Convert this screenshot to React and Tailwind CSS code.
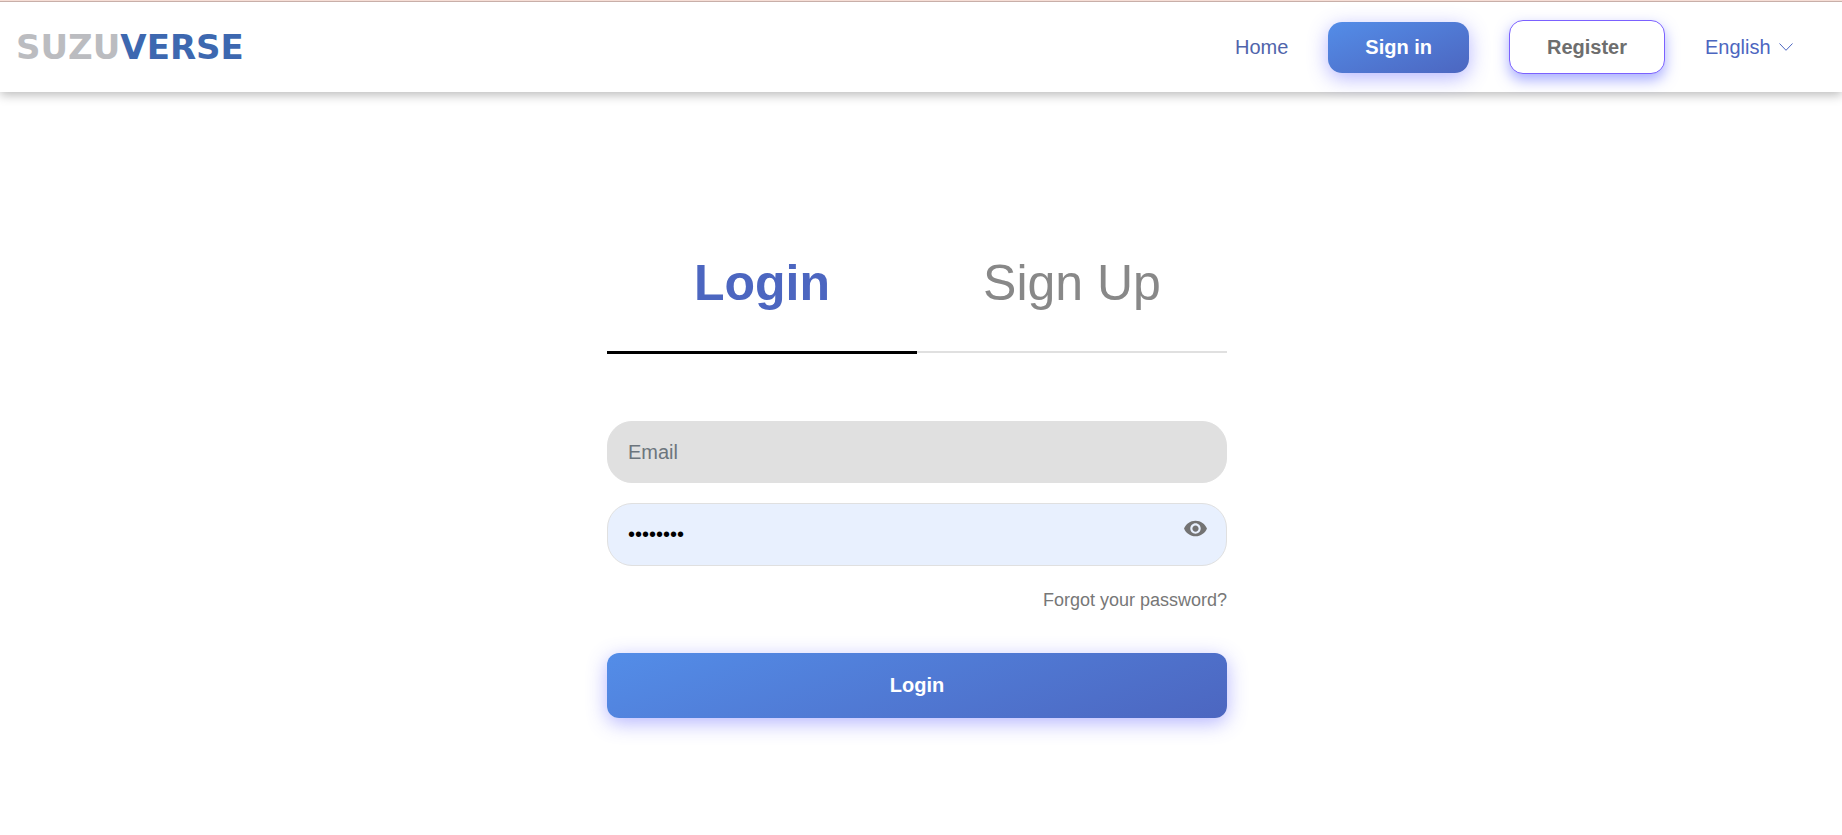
import { useState } from "react";
import { MdVisibility } from "react-icons/md";

function Navbar() {
  return (
    <header className="border-t border-[#f6ded6] bg-white shadow-[0_3px_10px_rgba(0,0,0,0.27)]">
      <div className="flex items-center justify-between h-[91px] pl-4 pr-[49px] border-t border-[#c8afa9]">
        <a
          href="#"
          className="font-['DejaVu_Sans',sans-serif] font-bold text-[34px] leading-10 text-[#bbbcc0]"
        >
          SUZU<span className="text-[#3d68b0]">VERSE</span>
        </a>
        <nav className="flex items-center gap-10 text-xl">
          <a href="#" className="text-[#5064ab]">
            Home
          </a>
          <button className="h-[51px] px-[37px] rounded-[14px] bg-linear-160 from-[#538de8] to-[#4c66c0] font-bold text-white shadow-[0_5px_20px_rgba(90,90,255,0.45)]">
            Sign in
          </button>
          <button className="h-[54px] px-[37px] rounded-[14px] border border-[#7b61ff] bg-white font-bold text-[#6e6e6e] shadow-[0_6px_14px_rgba(80,90,255,0.5)]">
            Register
          </button>
          <label className="flex items-center gap-2 text-[#4c66c0]">
            <select
              aria-label="Language"
              className="appearance-none bg-transparent"
            >
              <option>English</option>
            </select>
            <svg
              className="w-[14px] h-2"
              viewBox="0 0 14 8"
              fill="none"
              stroke="currentColor"
            >
              <path d="M.5.5 7 7.3 13.5.5" />
            </svg>
          </label>
        </nav>
      </div>
    </header>
  );
}

function Tabs() {
  return (
    <div className="flex items-start text-[50px] leading-[60px]">
      <button className="flex-1 pb-[38px] border-b-3 border-black font-bold text-[#4c66c0]">
        Login
      </button>
      <button className="flex-1 pb-[38px] border-b-2 border-[#e0e0e0] text-[#888888]">
        Sign Up
      </button>
    </div>
  );
}

export default function App() {
  const [email, setEmail] = useState("");
  const [password, setPassword] = useState("password");
  const [visible, setVisible] = useState(false);

  return (
    <div className="min-h-screen bg-white font-['Liberation_Sans',Arial,sans-serif]">
      <Navbar />
      <main className="pt-[161px] pr-2">
        <div className="w-full max-w-[620px] mx-auto">
          <Tabs />
          <form className="mt-[67px]" onSubmit={(e) => e.preventDefault()}>
            <input
              type="email"
              aria-label="Email"
              placeholder="Email"
              value={email}
              onChange={(e) => setEmail(e.target.value)}
              className="block w-full h-[62px] px-5 rounded-[25px] border border-[#e0e0e0] bg-[#e0e0e0] text-xl placeholder:text-[#6c757d]"
            />
            <div className="relative mt-5">
              <input
                type={visible ? "text" : "password"}
                aria-label="Password"
                value={password}
                onChange={(e) => setPassword(e.target.value)}
                className="block w-full h-[63px] pl-5 pr-14 rounded-[25px] border border-[#e0e0e0] bg-[#e8f0fe] text-xl text-black"
              />
              <button
                type="button"
                aria-label="Show password"
                onClick={() => setVisible(!visible)}
                className="absolute top-[13px] right-[19px] text-[#737373]"
              >
                <MdVisibility size={25} />
              </button>
            </div>
            <a
              href="#"
              className="block mt-[22px] text-right text-lg leading-6 text-[#777777]"
            >
              Forgot your password?
            </a>
            <button className="w-full h-[65px] pb-0.5 mt-[41px] rounded-xl bg-linear-160 from-[#538de8] to-[#4c66c0] text-xl font-bold text-white shadow-[0_5px_20px_rgba(90,90,255,0.45)]">
              Login
            </button>
          </form>
        </div>
      </main>
    </div>
  );
}
